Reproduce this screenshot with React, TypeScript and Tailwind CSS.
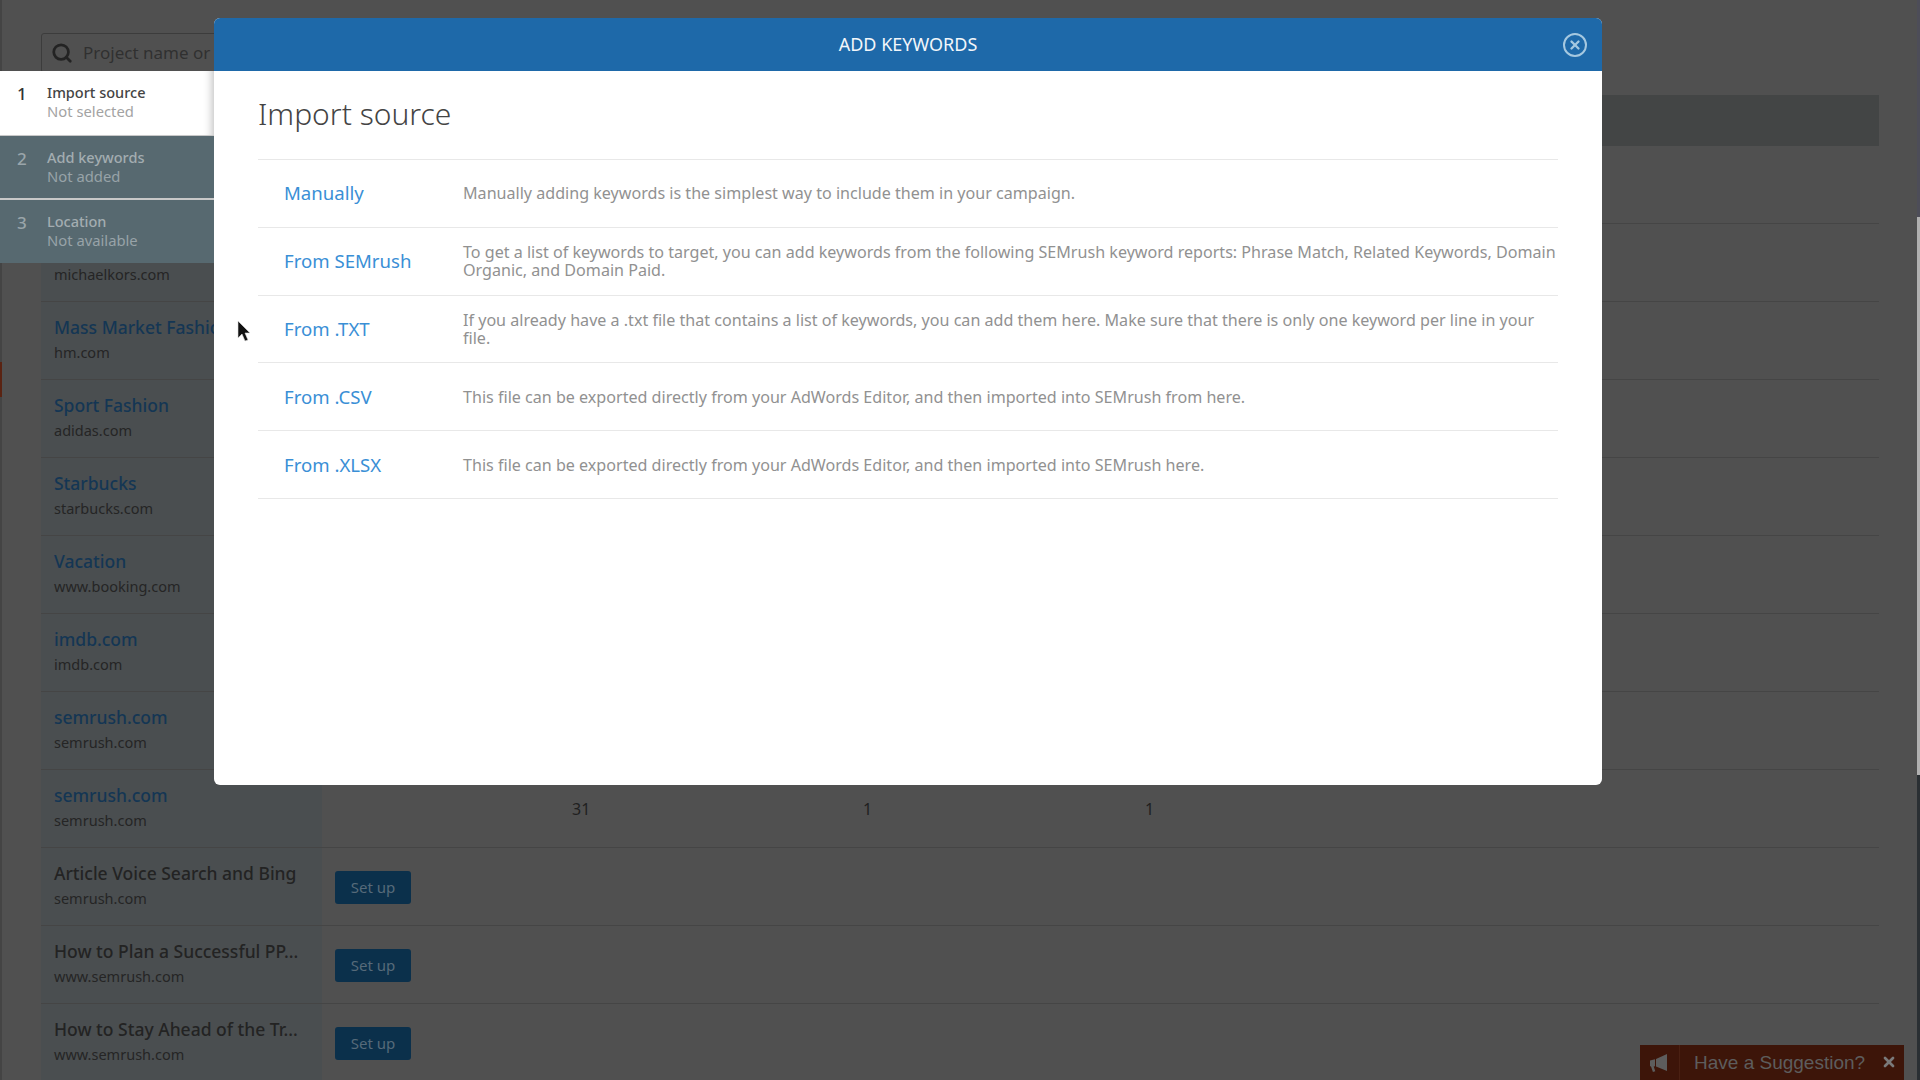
import { Search, X } from 'lucide-react';

const rows = [
  { name: '', domain: '' },
  { name: '', domain: 'michaelkors.com' },
  { name: 'Mass Market Fashion', domain: 'hm.com', link: true },
  { name: 'Sport Fashion', domain: 'adidas.com', link: true },
  { name: 'Starbucks', domain: 'starbucks.com', link: true },
  { name: 'Vacation', domain: 'www.booking.com', link: true },
  { name: 'imdb.com', domain: 'imdb.com', link: true },
  { name: 'semrush.com', domain: 'semrush.com', link: true },
  { name: 'semrush.com', domain: 'semrush.com', link: true, stats: true },
  { name: 'Article Voice Search and Bing', domain: 'semrush.com', setup: true },
  { name: 'How to Plan a Successful PP...', domain: 'www.semrush.com', setup: true },
  { name: 'How to Stay Ahead of the Tr...', domain: 'www.semrush.com', setup: true },
];

const sources = [
  { title: 'Manually', text: 'Manually adding keywords is the simplest way to include them in your campaign.' },
  {
    title: 'From SEMrush',
    text: 'To get a list of keywords to target, you can add keywords from the following SEMrush keyword reports: Phrase Match, Related Keywords, Domain Organic, and Domain Paid.',
  },
  {
    title: 'From .TXT',
    text: 'If you already have a .txt file that contains a list of keywords, you can add them here. Make sure that there is only one keyword per line in your file.',
  },
  { title: 'From .CSV', text: 'This file can be exported directly from your AdWords Editor, and then imported into SEMrush from here.' },
  { title: 'From .XLSX', text: 'This file can be exported directly from your AdWords Editor, and then imported into SEMrush here.' },
];

const steps = [
  { num: 1, title: 'Import source', sub: 'Not selected', active: true, box: 'h-[64px]' },
  { num: 2, title: 'Add keywords', sub: 'Not added', box: 'mt-px h-[62px]' },
  { num: 3, title: 'Location', sub: 'Not available', box: 'mt-[2px] h-[63px]' },
];

function App() {
  return (
    <div className="relative h-[1080px] w-[1920px] overflow-hidden bg-[#505050] font-['Noto_Sans',sans-serif]">
      {/* Dimmed page behind the dialog */}
      <div className="flex flex-col pl-[41px] pr-[41px] pt-[33px]">
        <div className="flex h-[40px] w-[420px] items-center gap-[10px] rounded-[3px] border border-[#3c3c3c] pl-[9px]">
          <Search size={22} strokeWidth={3} className="text-[#232323]" />
          <span className="text-[17px] text-[#303030]">Project name or domain</span>
        </div>
        <div className="mt-[22px] h-[51px] bg-[#434545]" />
        {rows.map((row, index) => (
          <div key={index} className="flex h-[78px] border-b border-[#454545]">
            <div className="flex w-[281px] flex-col justify-center bg-[#4a4e50] pb-[4px] pl-[13px]">
              <span className={`h-[26px] whitespace-nowrap text-[17.5px] font-medium leading-[26px] ${row.link ? 'text-[#143654]' : 'text-[#232323]'}`}>
                {row.name}
              </span>
              <span className="text-[14.5px] leading-[24px] text-[#252525]">{row.domain}</span>
            </div>
            <div className="flex flex-1 items-center pl-[13px] text-[16px] text-[#1f1f1f]">
              {row.setup && (
                <button className="mt-px h-[33px] w-[76px] rounded-[3px] bg-[#0b304b] text-[15px] text-[#566a79]">Set up</button>
              )}
              {row.stats && (
                <div className="flex">
                  <span className="ml-[237px] w-[291px]">31</span>
                  <span className="w-[282px]">1</span>
                  <span>1</span>
                </div>
              )}
            </div>
          </div>
        ))}
      </div>

      {/* Edges of the recording */}
      <div className="absolute left-0 top-0 h-full w-[2px] bg-[#444444]" />
      <div className="absolute left-0 top-[362px] h-[35px] w-[2px] bg-[#5a2312]" />
      <div className="absolute right-0 top-0 flex h-full w-[3px] flex-col">
        <div className="h-[217px] bg-[#4d4d58]" />
        <div className="h-[558px] bg-[#b0b0b0]" />
        <div className="flex-1 bg-[#2a2f33]" />
      </div>

      {/* Suggestion tab */}
      <div className="absolute bottom-0 left-[1640px] flex h-[35px] w-[264px] items-center bg-[#3d1509] text-[#5d5d5d]">
        <div className="flex h-full w-[40px] items-center justify-center border-r border-[#4a2012] pr-[4px]">
          <svg width="20" height="20" viewBox="0 0 20 20" fill="currentColor">
            <path d="M19 1v17L8 13.5V6z" />
            <path d="M2 7.5l5-1.2v7l-1.3.3 1.6 4.6-2.4.7-1.8-5.2L2 13z" />
          </svg>
        </div>
        <span className="ml-[14px] flex-1 pt-[2px] font-['Liberation_Sans',sans-serif] text-[19px]">Have a Suggestion?</span>
        <X size={16} strokeWidth={4} className="mb-[2px] mr-[7px] text-[#7a7a7a]" />
      </div>

      {/* Wizard steps */}
      <div className="absolute left-0 top-[71px] flex w-[214px] flex-col bg-[#c8c8c8]">
        {steps.map((step) => (
          <div
            key={step.num}
            className={`flex pl-[17px] pt-[12px] ${step.box} ${step.active ? 'bg-white shadow-[inset_-10px_0_8px_-8px_rgba(0,0,0,0.25)]' : 'bg-[#576970]'}`}
          >
            <span className={`w-[30px] pt-[1px] text-[17px] font-medium leading-[20px] ${step.active ? 'text-[#333333]' : 'text-[#9aa5aa]'}`}>
              {step.num}
            </span>
            <div className="flex flex-col">
              <span className={`text-[14.5px] font-medium leading-[19px] ${step.active ? 'text-[#444444]' : 'text-[#a3adb1]'}`}>
                {step.title}
              </span>
              <span className={`text-[14.8px] leading-[19px] ${step.active ? 'text-[#a3a3a3]' : 'text-[#98a3a8]'}`}>{step.sub}</span>
            </div>
          </div>
        ))}
      </div>

      {/* Dialog */}
      <div className="absolute left-[214px] top-[18px] flex h-[767px] w-[1388px] flex-col overflow-hidden rounded-[6px] bg-white">
        <div className="relative flex h-[53px] shrink-0 items-center justify-center bg-[#1e69a9] text-[18px] text-[#f2f6fa]">
          ADD KEYWORDS
          <div className="absolute right-[15px] top-[15px] flex h-[24px] w-[24px] items-center justify-center rounded-full border-2 border-[#a5c8e0]">
            <X size={14} strokeWidth={4} className="text-[#a5c8e0]" />
          </div>
        </div>
        <div className="flex flex-col px-[44px]">
          <h1 className="pb-[25px] pt-[22px] text-[30px] font-light leading-[41px] text-[#444444]">Import source</h1>
          <div className="border-t border-[#e8e8e8]">
            {sources.map((source) => (
              <div key={source.title} className="flex h-[67.8px] items-center border-b border-[#e8e8e8]">
                <a className="w-[205px] shrink-0 pl-[26px] text-[18.6px] text-[#3a8fd6]">{source.title}</a>
                <p className="text-[16.1px] leading-[18px] text-[#919191]">{source.text}</p>
              </div>
            ))}
          </div>
        </div>
      </div>

      {/* Mouse pointer */}
      <svg className="absolute left-[237px] top-[320px]" width="14" height="24" viewBox="0 0 14 24">
        <path d="M1 1v17l4-4 3 7 3-1-3-7h5z" fill="#111111" stroke="#dddddd" strokeWidth="0.6" />
      </svg>
    </div>
  );
}

export default App;
